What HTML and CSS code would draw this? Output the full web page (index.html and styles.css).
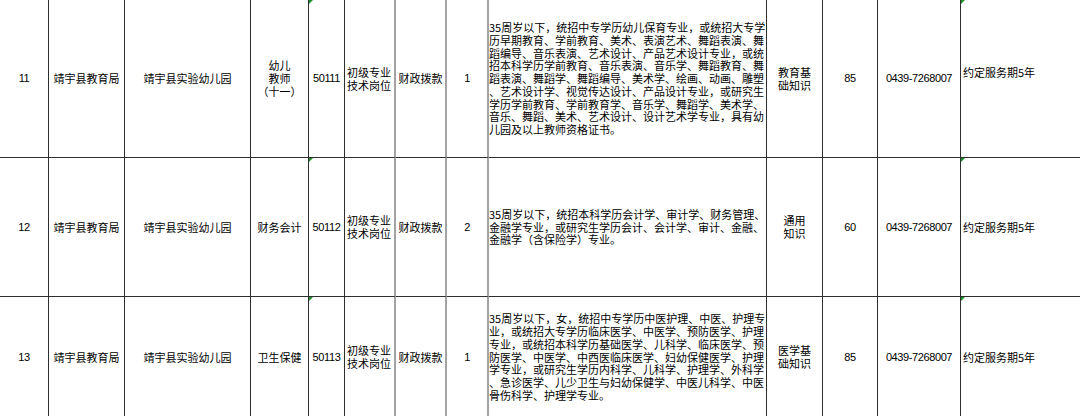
FILE: index.html
```html
<!DOCTYPE html>
<html lang="zh-CN">
<head>
<meta charset="utf-8">
<title>招聘岗位表</title>
<link rel="stylesheet" href="styles.css">
</head>
<body>
<table class="sheet">
  <colgroup>
    <col class="w-no"><col class="w-dept"><col class="w-unit"><col class="w-post"><col class="w-code"><col class="w-type"><col class="w-fund"><col class="w-num"><col class="w-desc"><col class="w-exam"><col class="w-score"><col class="w-tel"><col class="w-note">
  </colgroup>
  <tr class="r1">
    <td class="c num">11</td>
    <td class="c">靖宇县教育局</td>
    <td class="c">靖宇县实验幼儿园</td>
    <td class="c">幼儿<br>教师<br>（十一）</td>
    <td class="c num flag">50111</td>
    <td class="l g">初级专业<br>技术岗位</td>
    <td class="c g">财政拨款</td>
    <td class="c num g">1</td>
    <td class="desc">35周岁以下，统招中专学历幼儿保育专业，或统招大专学<br>历早期教育、学前教育、美术、表演艺术、舞蹈表演、舞<br>蹈编导、音乐表演、艺术设计、产品艺术设计专业，或统<br>招本科学历学前教育、音乐表演、音乐学、舞蹈教育、舞<br>蹈表演、舞蹈学、舞蹈编导、美术学、绘画、动画、雕塑<br>、艺术设计学、视觉传达设计、产品设计专业，或研究生<br>学历学前教育、学前教育学、音乐学、舞蹈学、美术学、<br>音乐、舞蹈、美术、艺术设计、设计艺术学专业，具有幼<br>儿园及以上教师资格证书。</td>
    <td class="c">教育基<br>础知识</td>
    <td class="c num">85</td>
    <td class="c num">0439-7268007</td>
    <td class="l flag note raised">约定服务期5年</td>
  </tr>
  <tr class="r2">
    <td class="c num">12</td>
    <td class="c">靖宇县教育局</td>
    <td class="c">靖宇县实验幼儿园</td>
    <td class="c">财务会计</td>
    <td class="c num flag">50112</td>
    <td class="l g">初级专业<br>技术岗位</td>
    <td class="c g">财政拨款</td>
    <td class="c num g">2</td>
    <td class="desc">35周岁以下，统招本科学历会计学、审计学、财务管理、<br>金融学专业，或研究生学历会计、会计学、审计、金融、<br>金融学（含保险学）专业。</td>
    <td class="c">通用<br>知识</td>
    <td class="c num">60</td>
    <td class="c num">0439-7268007</td>
    <td class="l flag note">约定服务期5年</td>
  </tr>
  <tr class="r3">
    <td class="c num">13</td>
    <td class="c">靖宇县教育局</td>
    <td class="c">靖宇县实验幼儿园</td>
    <td class="c">卫生保健</td>
    <td class="c num flag">50113</td>
    <td class="l g">初级专业<br>技术岗位</td>
    <td class="c g">财政拨款</td>
    <td class="c num g">1</td>
    <td class="desc">35周岁以下，女，统招中专学历中医护理、中医、护理专<br>业，或统招大专学历临床医学、中医学、预防医学、护理<br>专业，或统招本科学历基础医学、儿科学、临床医学、预<br>防医学、中医学、中西医临床医学、妇幼保健医学、护理<br>学专业，或研究生学历内科学、儿科学、护理学、外科学<br>、急诊医学、儿少卫生与妇幼保健学、中医儿科学、中医<br>骨伤科学、护理学专业。</td>
    <td class="c">医学基<br>础知识</td>
    <td class="c num">85</td>
    <td class="c num">0439-7268007</td>
    <td class="l flag note">约定服务期5年</td>
  </tr>
</table>
</body>
</html>
```
FILE: styles.css
```css
html, body {
  margin: 0;
  padding: 0;
  background: #ffffff;
  overflow: hidden;
  width: 1080px;
  height: 416px;
}

.sheet {
  table-layout: fixed;
  border-collapse: separate;
  border-spacing: 0;
  width: 1080px;
  font-family: "Noto Sans CJK SC", "Liberation Sans", sans-serif;
  font-size: 11px;
  line-height: 12.8px;
  color: #000000;
}

.w-no { width: 49px; }
.w-dept { width: 76px; }
.w-unit { width: 126px; }
.w-post { width: 58px; }
.w-code { width: 36px; }
.w-type { width: 51px; }
.w-fund { width: 51px; }
.w-num { width: 42px; }
.w-desc { width: 278px; }
.w-exam { width: 56px; }
.w-score { width: 55px; }
.w-tel { width: 83px; }
.w-note { width: 119px; }

.sheet td {
  box-sizing: border-box;
  border-right: 1px solid #2e2e2e;
  border-bottom: 1px solid #2e2e2e;
  padding: 0;
  vertical-align: middle;
  white-space: nowrap;
  overflow: hidden;
  position: relative;
}

.r1 { height: 158px; }
.r2 { height: 139px; }
.r3 { height: 121px; }

.sheet td.g {
  border-right: 2px solid #a3a3a3;
}

.sheet td.note {
  border-right: none;
}

.c { text-align: center; }

.sheet td.l {
  text-align: left;
  padding-left: 2px;
}

.num {
  font-family: "Liberation Sans", "Noto Sans CJK SC", sans-serif;
  font-size: 11px;
  letter-spacing: -0.4px;
}

.sheet td.desc {
  text-align: left;
  padding-left: 0;
}

.sheet td.raised {
  padding-bottom: 13px;
}

.flag::before {
  content: "";
  position: absolute;
  top: 0;
  left: 0;
  width: 0;
  height: 0;
  border-top: 4px solid #22902a;
  border-right: 4px solid transparent;
}
```
